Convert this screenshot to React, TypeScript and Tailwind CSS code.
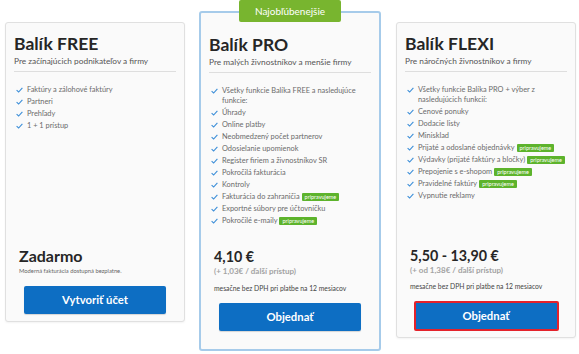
import React from "react";

const Check = () => (
  <svg width="7" height="6" viewBox="0 0 7 6" className="shrink-0 mt-[2px]">
    <path d="M0.6 3.2 L2.6 5 L6.4 0.8" fill="none" stroke="#3b8ed8" strokeWidth="1.1" />
  </svg>
);

const Badge = () => (
  <span className="inline-block ml-[2px] px-[3px] h-[8px] leading-[8px] text-[5.5px] text-white bg-[#5db32c] rounded-[1px] align-middle">
    pripravujeme
  </span>
);

type Item = { t: React.ReactNode; b?: boolean };

const List = ({ items }: { items: Item[] }) => (
  <ul className="ml-[2px] mt-[13px] flex flex-col gap-[2px]">
    {items.map((it, i) => (
      <li key={i} className="flex items-start gap-[4px] text-[7.4px] leading-[10px] text-[#6b6b6b]">
        <Check />
        <span>
          {it.t}
          {it.b && <Badge />}
        </span>
      </li>
    ))}
  </ul>
);

const Header = ({ title, sub }: { title: string; sub: string }) => (
  <>
    <h2 className="text-[17.5px] leading-[24px] font-bold text-[#262626]">{title}</h2>
    <p className="text-[8.3px] leading-[11px] text-[#555]">{sub}</p>
    <div className="mt-[4px] border-t border-[#dedede]" />
  </>
);

const Btn = ({ label, red }: { label: string; red?: boolean }) => (
  <div className="flex justify-center">
    <button
      className={
        red
          ? "w-[145px] h-[30px] bg-[#0d6ec3] text-white text-[11.3px] font-bold rounded-[2px] border-2 border-[#e3222b]"
          : "w-[142px] h-[28px] bg-[#0d6ec3] text-white text-[11.3px] font-bold rounded-[2px] shadow-[0_1px_1px_rgba(0,0,0,0.15)]"
      }
    >
      {label}
    </button>
  </div>
);

export default function App() {
  return (
    <div className="w-[579px] h-[354px] bg-white pl-[5px] flex items-start" style={{ fontFamily: "Lato, 'Noto Sans', sans-serif" }}>
      {/* FREE */}
      <div className="mt-[22px] w-[180px] h-[300px] bg-[#fafafa] border border-[#e0e0e0] rounded-[3px] shadow-[0_1px_2px_rgba(0,0,0,0.05)] pt-[9px] px-[8px] pb-[7px] flex flex-col">
        <Header title="Balík FREE" sub="Pre začínajúcich podnikateľov a firmy" />
        <List
          items={[
            { t: "Faktúry a zálohové faktúry" },
            { t: "Partneri" },
            { t: "Prehľady" },
            { t: "1 + 1 prístup" },
          ]}
        />
        <div className="flex-1" />
        <div className="pl-[5px]">
          <div className="text-[16px] leading-[20px] font-bold text-[#262626]">Zadarmo</div>
          <div className="text-[5.8px] leading-[10px] text-[#666]">Moderná fakturácia dostupná bezplatne.</div>
        </div>
        <div className="mt-[10px]">
          <Btn label="Vytvoriť účet" />
        </div>
      </div>

      {/* PRO */}
      <div className="relative ml-[14px] mt-[11px] w-[182px] h-[340px] bg-[#fafafa] border-2 border-[#a6cbea] rounded-[3px] pt-[20px] px-[8px] pb-[18px] flex flex-col">
        <div className="absolute left-[38px] top-[-13px] w-[102px] h-[22px] bg-[#78b52f] rounded-[2px] flex items-center justify-center text-white text-[10px]">
          Najobľúbenejšie
        </div>
        <Header title="Balík PRO" sub="Pre malých živnostníkov a menšie firmy" />
        <List
          items={[
            { t: <>Všetky funkcie Balíka FREE a nasledujúce<br />funkcie:</> },
            { t: "Úhrady" },
            { t: "Online platby" },
            { t: "Neobmedzený počet partnerov" },
            { t: "Odosielanie upomienok" },
            { t: "Register firiem a živnostníkov SR" },
            { t: "Pokročilá fakturácia" },
            { t: "Kontroly" },
            { t: "Fakturácia do zahraničia", b: true },
            { t: "Exportné súbory pre účtovníčku" },
            { t: "Pokročilé e-maily", b: true },
          ]}
        />
        <div className="flex-1" />
        <div className="pl-[5px]">
          <div className="text-[14.3px] leading-[18px] font-bold text-[#262626]">4,10 €</div>
          <div className="text-[8px] leading-[10px] font-bold text-[#a3a3a3]">(+ 1,03€ / ďalší prístup)</div>
          <div className="mt-[7px] text-[6.8px] leading-[10px] text-[#444]">mesačne bez DPH pri platbe na 12 mesiacov</div>
        </div>
        <div className="mt-[10px]">
          <Btn label="Objednať" />
        </div>
      </div>

      {/* FLEXI */}
      <div className="ml-[15px] mt-[22px] w-[180px] h-[316px] bg-[#fafafa] border border-[#e0e0e0] rounded-[3px] shadow-[0_1px_2px_rgba(0,0,0,0.05)] pt-[9px] px-[8px] pb-[6px] flex flex-col">
        <Header title="Balík FLEXI" sub="Pre náročných živnostníkov a firmy" />
        <List
          items={[
            { t: <>Všetky funkcie Balíka PRO + výber z<br />nasledujúcich funkcií:</> },
            { t: "Cenové ponuky" },
            { t: "Dodacie listy" },
            { t: "Minisklad" },
            { t: "Prijaté a odoslané objednávky", b: true },
            { t: "Výdavky (prijaté faktúry a bločky)", b: true },
            { t: "Prepojenie s e-shopom", b: true },
            { t: "Pravidelné faktúry", b: true },
            { t: "Vypnutie reklamy" },
          ]}
        />
        <div className="flex-1" />
        <div className="pl-[5px]">
          <div className="text-[14.3px] leading-[18px] font-bold text-[#262626]">5,50 - 13,90 €</div>
          <div className="text-[8px] leading-[10px] font-bold text-[#a3a3a3]">(+ od 1,38€ / ďalší prístup)</div>
          <div className="mt-[6px] text-[6.8px] leading-[10px] text-[#444]">mesačne bez DPH pri platbe na 12 mesiacov</div>
        </div>
        <div className="mt-[10px]">
          <Btn label="Objednať" red />
        </div>
      </div>
    </div>
  );
}
